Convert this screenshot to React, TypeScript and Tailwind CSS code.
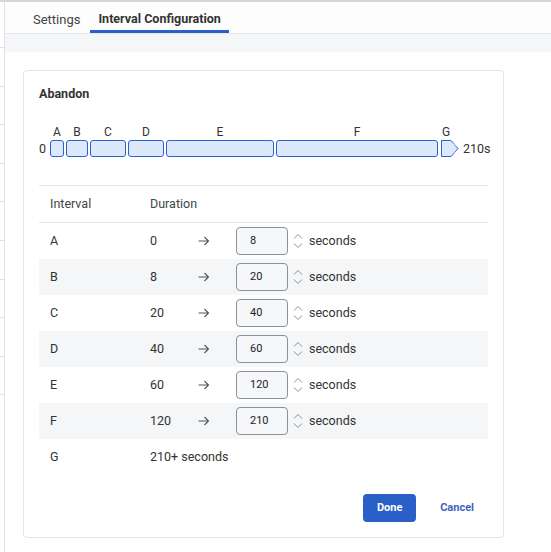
import React from 'react'

const intervals = [
  { id: 'A', from: 0, to: 8 },
  { id: 'B', from: 8, to: 20 },
  { id: 'C', from: 20, to: 40 },
  { id: 'D', from: 40, to: 60 },
  { id: 'E', from: 60, to: 120 },
  { id: 'F', from: 120, to: 210 },
]

const PX_PER_SEC = 1.8

function Spinner() {
  return (
    <div className="flex flex-col items-center justify-center gap-[4px] w-[12px]">
      <svg width="10" height="6" viewBox="0 0 10 6">
        <path d="M1 5.5 L5 1.5 L9 5.5" fill="none" stroke="#8a8f98" strokeWidth="1" />
      </svg>
      <svg width="10" height="6" viewBox="0 0 10 6">
        <path d="M1 0.5 L5 4.5 L9 0.5" fill="none" stroke="#8a8f98" strokeWidth="1" />
      </svg>
    </div>
  )
}

function Timeline() {
  return (
    <div className="flex items-end mt-[25px] text-[12px] text-[#333]">
      <span className="w-[11px] shrink-0 text-[12.5px] leading-[17px]">0</span>
      <div className="flex gap-[2px] shrink-0">
        {intervals.map((iv) => (
          <div key={iv.id} className="flex flex-col items-center shrink-0">
            <span className="leading-[13px] mb-[1px]">{iv.id}</span>
            <div
              className="h-[17px] rounded-[3px] border border-[#2f62c9] bg-[#dce8fc]"
              style={{ width: Math.round((iv.to - iv.from) * PX_PER_SEC) }}
            />
          </div>
        ))}
        <div className="flex flex-col items-start shrink-0 ml-[1px]">
          <span className="leading-[13px] mb-[1px] pl-[1px]">G</span>
          <svg width="18" height="17" viewBox="0 0 18 17">
            <path d="M0.5 0.5 L10 0.5 L17 8.5 L10 16.5 L0.5 16.5 Z" fill="#dce8fc" stroke="#2f62c9" strokeWidth="1" />
            <path d="M10 0.5 L17 8.5 L10 16.5" fill="none" stroke="#7d9ee0" strokeWidth="1" />
          </svg>
        </div>
      </div>
      <span className="ml-[4px] shrink-0 text-[12.5px] leading-[17px]">210s</span>
    </div>
  )
}

export default function App() {
  return (
    <div
      className="w-[551px] h-[552px] bg-white text-[#333] border-t-2 border-[#d6d6d6] flex"
      style={{ fontFamily: 'Roboto, "Noto Sans", sans-serif' }}
    >
      {/* clipped sidebar on the left */}
      <div className="w-[5px] border-r border-[#dfe3e8] flex flex-col pt-[45px]">
        {Array.from({ length: 10 }).map((_, i) => (
          <div key={i} className="h-[38.6px] border-t border-[#dfe3e8]" />
        ))}
      </div>

      <div className="flex-1 flex flex-col">
        {/* tabs */}
        <div className="h-[32px] bg-[#fdfdfd] border-b border-[#e4e6ea] flex items-end pl-[23px]">
          <div className="px-[5px] pb-[4px] text-[13px] text-[#444]">Settings</div>
          <div className="ml-[5px] px-[8px] pb-[1px] border-b-[3px] border-[#2a5fc8] text-[12.5px] font-bold text-[#333]">
            Interval Configuration
          </div>
        </div>
        <div className="h-[18px] bg-[#f5f6f8]" />

        {/* card */}
        <div className="ml-[18px] mt-[18px] w-[481px] h-[468px] border border-[#e2e4e8] rounded-[4px] px-[15px] pt-[15px] flex flex-col">
          <div className="text-[12.5px] font-bold text-[#333] leading-[15px]">Abandon</div>
          <Timeline />

          <div className="mt-[28px] border-t border-[#e4e6ea]" />
          <div className="h-[37px] flex items-center border-b border-[#e4e6ea] text-[12.5px] text-[#444] pl-[11px]">
            <span className="w-[100px]">Interval</span>
            <span>Duration</span>
          </div>

          {intervals.map((iv, i) => (
            <div
              key={iv.id}
              className={`h-[36px] flex items-center pl-[11px] text-[12.5px] ${i % 2 === 1 ? 'bg-[#f5f6f8]' : ''}`}
            >
              <span className="w-[100px]">{iv.id}</span>
              <span className="w-[48px]">{iv.from}</span>
              <span className="w-[38px] text-[#555]">
                <svg width="12" height="10" viewBox="0 0 12 10">
                  <path d="M0.5 5 H10.5 M6.5 1 L10.5 5 L6.5 9" fill="none" stroke="#555" strokeWidth="1.1" />
                </svg>
              </span>
              <div className="w-[52px] h-[28px] rounded-[4px] border border-[#8d9199] bg-[#f6f7f9] flex items-center pl-[13px] text-[11px] text-[#222]">
                {iv.to}
              </div>
              <div className="ml-[4px]">
                <Spinner />
              </div>
              <span className="ml-[5px]">seconds</span>
            </div>
          ))}
          <div className="h-[36px] flex items-center pl-[11px] text-[12.5px]">
            <span className="w-[100px]">G</span>
            <span>210+ seconds</span>
          </div>

          <div className="mt-[19px] flex items-center justify-end pr-[14px]">
            <button className="w-[53px] h-[28px] rounded-[4px] bg-[#2a5fc8] text-white text-[11px] font-bold">
              Done
            </button>
            <button className="ml-[24px] text-[11px] font-bold text-[#3f5fc2]">Cancel</button>
          </div>
        </div>
      </div>
    </div>
  )
}
